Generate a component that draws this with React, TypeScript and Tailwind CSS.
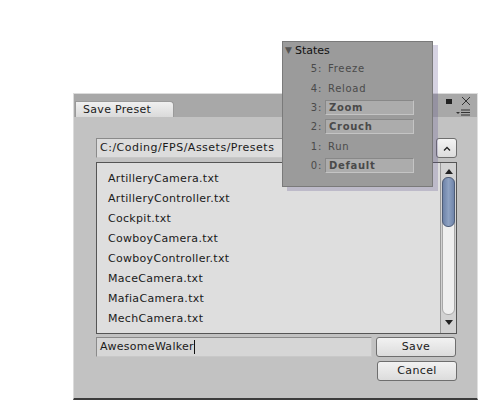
import React from 'react';

const files = [
  'ArtilleryCamera.txt',
  'ArtilleryController.txt',
  'Cockpit.txt',
  'CowboyCamera.txt',
  'CowboyController.txt',
  'MaceCamera.txt',
  'MafiaCamera.txt',
  'MechCamera.txt',
];

const states = [
  { n: '5', label: 'Freeze', field: false },
  { n: '4', label: 'Reload', field: false },
  { n: '3', label: 'Zoom', field: true },
  { n: '2', label: 'Crouch', field: true },
  { n: '1', label: 'Run', field: false },
  { n: '0', label: 'Default', field: true },
];

function StatesPanel() {
  return (
    <div className="absolute left-[282px] top-[41px] w-[151px] h-[146px] bg-[#9b9b9b] border border-[#7a7a7a] shadow-[5px_4px_0_rgba(90,80,140,0.25)]">
      <div className="flex items-center h-[17px] pt-[1px] pl-[2px] text-[11px] text-[#111]">
        <span className="text-[9px] text-[#555] mr-[3px]">▼</span>
        <span>States</span>
      </div>
      <div className="flex flex-col">
        {states.map((s) => (
          <div key={s.n} className="flex items-center h-[19.4px] text-[10px] tracking-[0.7px] text-[#4a4a4a]">
            <span className="w-[42px] text-right pr-[3px]">{s.n}:</span>
            {s.field ? (
              <span className="w-[89px] h-[15px] bg-[#acacac] border border-[#888] border-b-[#c4c4c4] border-r-[#c4c4c4] pl-[3px] font-bold leading-[13px]">
                {s.label}
              </span>
            ) : (
              <span className="pl-[3px]">{s.label}</span>
            )}
          </div>
        ))}
      </div>
    </div>
  );
}

function Btn({ children }: { children: React.ReactNode }) {
  return (
    <div className="w-[80px] h-[20px] rounded-[3px] border border-[#6e6e6e] bg-gradient-to-b from-[#f2f2f2] to-[#dcdcdc] flex items-center justify-center text-[11px] tracking-[0.4px] text-[#1a1a1a]">
      {children}
    </div>
  );
}

export default function App() {
  return (
    <div className="relative w-[479px] h-[400px] bg-white overflow-hidden font-['DejaVu_Sans',sans-serif]">
      <div className="ml-[73px] mt-[93px] w-[405px] h-[307px] flex flex-col border-l border-t border-[#dcdcdc] border-r-[#e0e0e0] border-r border-b-2 border-b-[#3c3c3c]">
        <div className="h-[23px] bg-[#a8a8a8] flex items-end relative">
          <div className="ml-[1px] w-[99px] h-[16px] bg-gradient-to-b from-[#f0f0f0] to-[#dadada] border border-b-0 border-[#9a9a9a] rounded-tr-[4px] text-[11px] tracking-[0.3px] text-[#1a1a1a] pl-[7px] leading-[15px]">
            Save Preset
          </div>
          <div className="absolute right-[6px] top-[2px] flex items-center gap-[9px] text-[#222]">
            <span className="w-[6px] h-[5px] bg-[#222] border border-[#222] inline-block" />
            <svg width="10" height="10" viewBox="0 0 10 10">
              <path d="M1 1 L9 9 M9 1 L1 9" stroke="#333" strokeWidth="1" />
            </svg>
          </div>
          <div className="absolute right-[7px] top-[15px]">
            <svg width="14" height="7" viewBox="0 0 14 7">
              <path d="M0 3 L4 3 L2 5 Z" fill="#333" />
              <path d="M5 1 H14 M5 3.5 H14 M5 6 H14" stroke="#333" strokeWidth="1" />
            </svg>
          </div>
        </div>
        <div className="flex-1 bg-[#c2c2c2] pl-[22px] pr-[20px] pt-[21px]">
          <div className="flex gap-[4px]">
            <div className="w-[336px] h-[20px] bg-[#dcdcdc] border border-[#8a8a8a] border-b-[#c8c8c8] border-r-[#c8c8c8] text-[11px] tracking-[0.5px] text-[#1a1a1a] pl-[3px] leading-[18px]">
              C:/Coding/FPS/Assets/Presets
            </div>
            <div className="w-[21px] h-[20px] rounded-[3px] border border-[#6e6e6e] bg-gradient-to-b from-[#f4f4f4] to-[#dcdcdc] flex items-center justify-center">
              <svg width="8" height="5" viewBox="0 0 8 5">
                <path d="M1 4.5 L4 1.5 L7 4.5" stroke="#222" strokeWidth="1.3" fill="none" />
              </svg>
            </div>
          </div>
          <div className="mt-[4px] flex h-[172px] border border-[#555] bg-[#dedede]">
            <div className="flex-1 pl-[11px] pt-[6px] flex flex-col">
              {files.map((f) => (
                <div key={f} className="h-[20px] leading-[20px] text-[11px] tracking-[0.3px] text-[#1a1a1a]">
                  {f}
                </div>
              ))}
            </div>
            <div className="w-[16px] border-l border-[#9a9a9a] bg-[#d2d2d2] flex flex-col items-center">
              <svg width="8" height="6" viewBox="0 0 8 6" className="mt-[5px]">
                <path d="M0 6 L4 1 L8 6 Z" fill="#222" />
              </svg>
              <div className="mt-[3px] w-[13px] h-[138px] rounded-[6px] bg-[#efefef] border border-[#a8a8a8] relative">
                <div className="absolute left-[-1px] top-[-1px] w-[13px] h-[50px] rounded-[6px] bg-gradient-to-r from-[#6e83a8] via-[#8ea2c2] to-[#7085aa] border border-[#4e5d78]" />
              </div>
              <svg width="8" height="6" viewBox="0 0 8 6" className="mt-[5px]">
                <path d="M0 0 L4 5 L8 0 Z" fill="#222" />
              </svg>
            </div>
          </div>
          <div className="mt-[3px] flex gap-[4px]">
            <div className="w-[276px] h-[20px] bg-[#d6d6d6] border border-[#8a8a8a] border-b-[#c8c8c8] border-r-[#c8c8c8] text-[11px] tracking-[0.3px] text-[#1a1a1a] pl-[3px] leading-[18px] flex items-center">
              AwesomeWalker<span className="w-[1px] h-[14px] bg-[#111]" />
            </div>
            <Btn>Save</Btn>
          </div>
          <div className="mt-[4px] flex justify-end">
            <Btn>Cancel</Btn>
          </div>
        </div>
      </div>
      <StatesPanel />
    </div>
  );
}
